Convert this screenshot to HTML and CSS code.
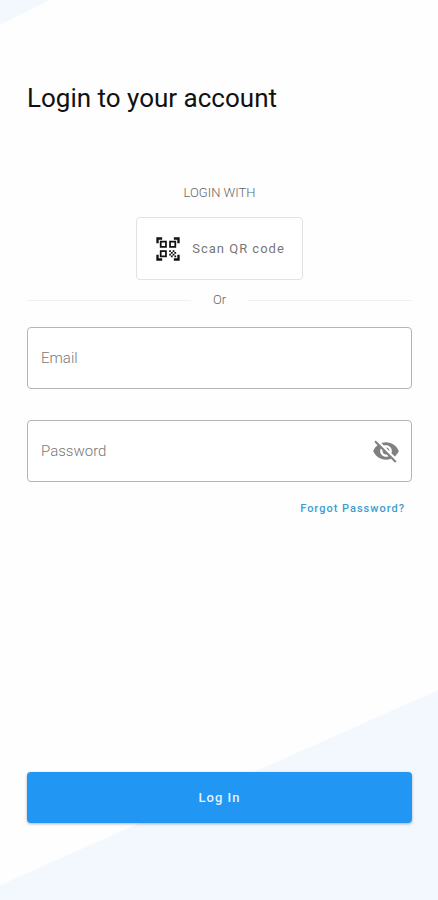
FILE: index.html
```html
<!DOCTYPE html>
<html lang="en">
<head>
  <meta charset="UTF-8" />
  <meta name="viewport" content="width=device-width, initial-scale=1.0"/>
  <title>Login</title>
  <link rel="stylesheet" href="styles.css">
</head>
<body>
  <form class="login-page" onsubmit="return false">
    <h1>Login to your account</h1>

    <p class="login-with">LOGIN WITH</p>
    <button type="button" class="qr-btn">
      <svg class="icon" viewBox="0 0 24 24" aria-hidden="true">
        <path d="M9.5 6.5v3h-3v-3h3M11 5H5v6h6V5zM9.5 14.5v3h-3v-3h3M11 13H5v6h6v-6zM17.5 6.5v3h-3v-3h3M19 5h-6v6h6V5zM13 13h1.5v1.5H13V13zM14.5 14.5H16V16h-1.5v-1.5zM16 13h1.5v1.5H16V13zM13 16h1.5v1.5H13V16zM14.5 17.5H16V19h-1.5v-1.5zM16 16h1.5v1.5H16V16zM17.5 14.5H19V16h-1.5v-1.5zM17.5 17.5H19V19h-1.5v-1.5zM22 7h-2V4h-3V2h5v5zM22 22v-5h-2v3h-3v2h5zM2 22h5v-2H4v-3H2v5zM2 2v5h2V4h3V2H2z"/>
      </svg>
      Scan QR code
    </button>

    <div class="divider">Or</div>

    <div class="field">
      <input type="email" class="input-box" id="email" placeholder="Email" aria-label="Email">
    </div>
    <div class="field">
      <input type="password" class="input-box" id="password" placeholder="Password" aria-label="Password">
      <button type="button" class="toggle-btn" aria-label="Show password" onclick="togglePassword()">
        <svg class="icon" viewBox="0 0 24 24" aria-hidden="true">
          <path d="M12 7c2.76 0 5 2.24 5 5 0 .65-.13 1.26-.36 1.83l2.92 2.92c1.51-1.26 2.7-2.89 3.43-4.75-1.73-4.39-6-7.5-11-7.5-1.4 0-2.74.25-3.98.7l2.16 2.16C10.74 7.13 11.35 7 12 7zM2 4.27l2.28 2.28.46.46C3.08 8.3 1.78 10.02 1 12c1.73 4.39 6 7.5 11 7.5 1.55 0 3.03-.3 4.38-.84l.42.42L19.73 22 21 20.73 3.27 3 2 4.27zM7.53 9.8l1.55 1.55c-.05.21-.08.43-.08.65 0 1.66 1.34 3 3 3 .22 0 .44-.03.65-.08l1.55 1.55c-.67.33-1.41.53-2.2.53-2.76 0-5-2.24-5-5 0-.79.2-1.53.53-2.2zm4.31-.78l3.15 3.15.02-.16c0-1.66-1.34-3-3-3l-.17.01z"/>
        </svg>
      </button>
    </div>
    <a href="#" class="forgot">Forgot Password?</a>

    <button type="submit" class="login-btn">Log In</button>
  </form>

  <script>
    function togglePassword() {
      let input = document.getElementById('password');
      input.type = input.type === 'password' ? 'text' : 'password';
    }
  </script>
</body>
</html>
```

FILE: styles.css
```css
* { margin: 0; padding: 0; box-sizing: border-box; font-family: Roboto, sans-serif; }

body {
  background: #fefefe;
}

.login-page {
  position: relative;
  z-index: 0;
  display: flex;
  flex-direction: column;
  min-height: 100vh;
  padding: 82px 26px 77px 27px;
  overflow: hidden;
}

/* pale blue corners behind the form */
.login-page::before,
.login-page::after {
  content: '';
  position: absolute;
  z-index: -1;
  background: #f2f8fe;
}

.login-page::before {
  top: 0;
  left: 0;
  width: 50px;
  height: 25px;
  clip-path: polygon(0 0, 100% 0, 0 100%);
}

.login-page::after {
  right: 0;
  bottom: 0;
  width: 100%;
  height: 210px;
  clip-path: polygon(100% 0, 100% 100%, 0 100%, 0 93%);
}

h1 {
  color: #111;
  font-size: 26px;
  font-weight: 400;
  line-height: 32px;
  margin-bottom: 71px;
}

.login-with {
  color: #666;
  font-size: 13px;
  font-weight: 300;
  line-height: 16px;
  text-align: center;
  margin-bottom: 16px;
}

.icon {
  width: 28px;
  height: 28px;
  fill: currentColor;
}

.qr-btn {
  display: flex;
  align-items: center;
  align-self: center;
  gap: 10px;
  height: 63px;
  padding: 0 17px;
  border: 1px solid #e2e2e2;
  border-radius: 4px;
  background: #fff;
  color: #777;
  font-size: 13px;
  letter-spacing: 1px;
  cursor: pointer;
}

.qr-btn .icon {
  color: #111;
}

.divider {
  display: flex;
  align-items: center;
  gap: 22px;
  margin: 12px 0 19px;
  color: #666;
  font-size: 13px;
  font-weight: 300;
  line-height: 16px;
}

.divider::before,
.divider::after {
  content: '';
  flex: 1;
  height: 1px;
  background: #f0f0f0;
}

.field {
  position: relative;
  margin-bottom: 31px;
}

.input-box {
  display: block;
  width: 100%;
  height: 62px;
  padding: 0 13px;
  border: 1px solid #b4b4b4;
  border-radius: 4px;
  outline: none;
  background: #fff;
  color: #222;
  font-size: 15px;
  font-weight: 300;
}

.input-box::placeholder {
  color: #777;
}

.toggle-btn {
  position: absolute;
  top: 0;
  right: 12px;
  display: flex;
  align-items: center;
  height: 100%;
  border: none;
  background: none;
  color: #808080;
  cursor: pointer;
}

.forgot {
  align-self: flex-end;
  margin: -12px 7px 0 0;
  color: #3a9fd0;
  font-size: 11px;
  font-weight: 500;
  line-height: 16px;
  letter-spacing: 1px;
  text-decoration: none;
}

.login-btn {
  height: 51px;
  margin-top: auto;
  border: none;
  border-radius: 4px;
  background: #2196f3;
  box-shadow: 0 1px 3px rgba(0, 0, 0, 0.3);
  color: #e6f3fe;
  font-size: 13px;
  font-weight: 500;
  letter-spacing: 1px;
  cursor: pointer;
}
```
